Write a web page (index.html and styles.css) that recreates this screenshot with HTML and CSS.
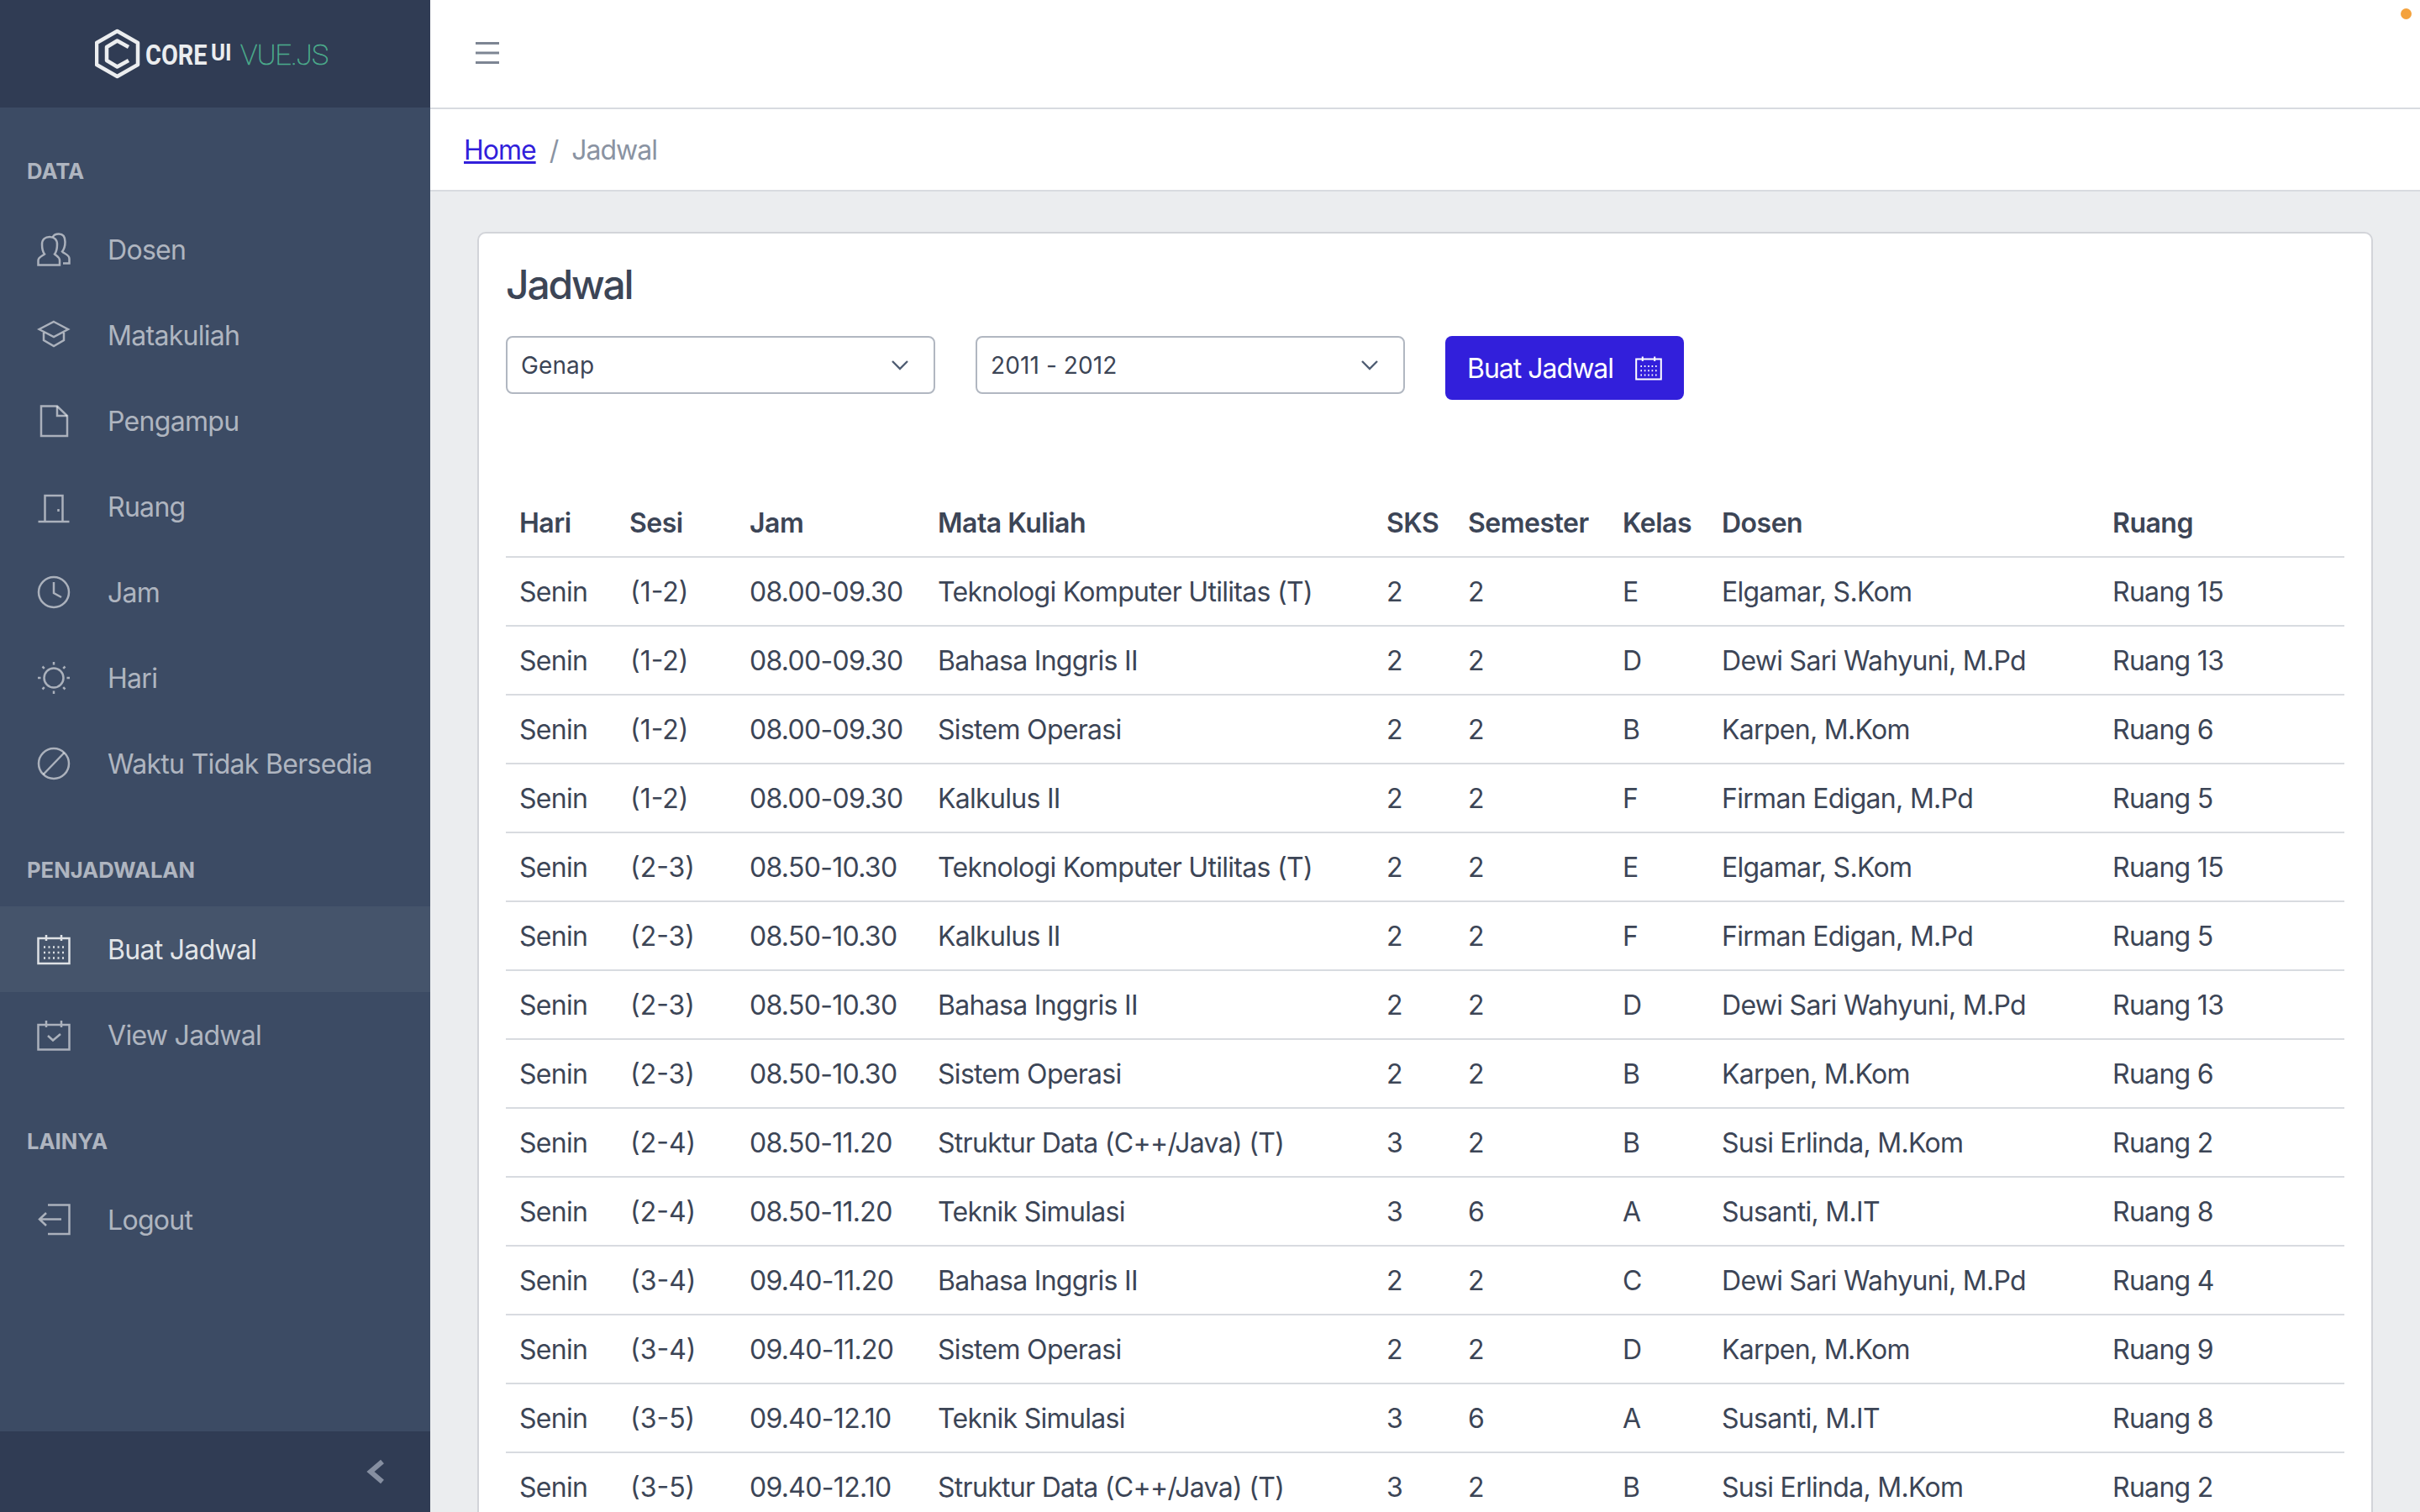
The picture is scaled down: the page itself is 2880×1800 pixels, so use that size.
FILE: index.html
```html
<!DOCTYPE html>
<html lang="en">

<head>
    <meta charset="UTF-8">
    <meta name="viewport" content="width=device-width, initial-scale=1.0">
    <title>Jadwal</title>
    <link rel="stylesheet" href="styles.css">
</head>

<body>
    <svg class="icon-defs" xmlns="http://www.w3.org/2000/svg">
        <symbol id="i-people" viewBox="0 0 40 40">
            <path d="M1.5 38.5V33c0-4 5.500-5.500 7.500-7.500C7 23 6 19 6 14c0-6 4-9 9-9s9 3 9 9c0 5-1 9-3 11.500 2 2 6 3.500 6 7.500v5.500z" />
            <path d="M19 5c1-2.500 4-3.500 7-3.500 5 0 7.500 3.500 7.500 9.500 0 6-1.500 9-3.500 11.500 2 2.500 8.500 3.500 8.500 8.500v5.500H31" />
        </symbol>
        <symbol id="i-cap" viewBox="0 0 40 40">
            <path d="M20 4l17 9-17 9-17.500-9z" />
            <path d="M8 17v9l12 7 12-7v-9" />
        </symbol>
        <symbol id="i-file" viewBox="0 0 40 40">
            <path d="M5 2.500h19L36 14v24H5z" />
            <path d="M24 2.500V14h12" />
        </symbol>
        <symbol id="i-door" viewBox="0 0 40 40">
            <path d="M1.500 38h37M9.500 38V7h21v31M25.500 23v3" />
        </symbol>
        <symbol id="i-clock" viewBox="0 0 40 40">
            <circle cx="20" cy="20" r="18" />
            <path d="M20 8v13l9 5" />
        </symbol>
        <symbol id="i-sun" viewBox="0 0 40 40">
            <circle cx="20" cy="20" r="11.500" />
            <path d="M20 1v3.500M20 35.500V39M1 20h3.500M35.500 20H39M6.500 6.500l2.300 2.300M31.200 31.200l2.300 2.300M33.500 6.500l-2.300 2.300M8.800 31.200l-2.300 2.300" />
        </symbol>
        <symbol id="i-ban" viewBox="0 0 40 40">
            <circle cx="20" cy="20" r="18" />
            <path d="M7.500 33L32.500 7" />
        </symbol>
        <symbol id="i-calendar" viewBox="0 0 40 40">
            <path d="M1.500 7h37v30h-37zM11 3v7M29 3v7" />
            <path class="dots" d="M8 17.500h2M13.500 17.500h2M19 17.500h2M24.500 17.500h2M30 17.500h2M8 24h2M13.500 24h2M19 24h2M24.500 24h2M30 24h2M8 30.500h2M13.500 30.500h2M19 30.500h2M24.500 30.500h2M30 30.500h2" />
        </symbol>
        <symbol id="i-calendar-check" viewBox="0 0 40 40">
            <path d="M1.500 8h37v29.500h-37zM11 3v8M29 3v8" />
            <path d="M13 21l6 5.500 9-7.500" />
        </symbol>
        <symbol id="i-logout" viewBox="0 0 40 40">
            <path d="M13 2.500h25.500V37H13M29 19.500H3M11 12l-8 7.500 8 7.500" />
        </symbol>
    </svg>

    <div class="wrapper">
        <aside class="sidebar">
            <div class="brand">
                <svg class="logo" viewBox="113 32 286 64" width="286" height="64" xmlns="http://www.w3.org/2000/svg">
                    <path class="logo-hex" d="M139.500 37l24.500 14v26l-24.500 14L115 77V51z" />
                    <path class="logo-c" d="M153 56l-13.500-7.500L127 56v16l12.500 7.500L153 72" />
                    <g transform="translate(173 77) scale(.85 1)"><text class="logo-core">CORE</text></g>
                    <g transform="translate(251 72) scale(.96 1)"><text class="logo-ui">UI</text></g>
                    <text class="logo-vue" x="286" y="77" textLength="105" lengthAdjust="spacing">VUE.JS</text>
                </svg>
            </div>
            <nav class="nav">
                <div class="nav-title">Data</div>
                <a class="nav-link"><svg class="nav-icon"><use href="#i-people" /></svg>Dosen</a>
                <a class="nav-link"><svg class="nav-icon"><use href="#i-cap" /></svg>Matakuliah</a>
                <a class="nav-link"><svg class="nav-icon"><use href="#i-file" /></svg>Pengampu</a>
                <a class="nav-link"><svg class="nav-icon"><use href="#i-door" /></svg>Ruang</a>
                <a class="nav-link"><svg class="nav-icon"><use href="#i-clock" /></svg>Jam</a>
                <a class="nav-link"><svg class="nav-icon"><use href="#i-sun" /></svg>Hari</a>
                <a class="nav-link"><svg class="nav-icon"><use href="#i-ban" /></svg>Waktu Tidak Bersedia</a>
                <div class="nav-title">Penjadwalan</div>
                <a class="nav-link active"><svg class="nav-icon"><use href="#i-calendar" /></svg>Buat Jadwal</a>
                <a class="nav-link"><svg class="nav-icon"><use href="#i-calendar-check" /></svg>View Jadwal</a>
                <div class="nav-title">Lainya</div>
                <a class="nav-link"><svg class="nav-icon"><use href="#i-logout" /></svg>Logout</a>
            </nav>
            <div class="sidebar-footer">
                <button class="sidebar-toggler">
                    <svg viewBox="0 0 32 32" width="32" height="32"><path d="M23 4L9 16l14 12" /></svg>
                </button>
            </div>
        </aside>

        <div class="main">
            <header class="topbar">
                <svg class="menu-icon" viewBox="0 0 40 40" width="40" height="40"><path d="M6 7.500h28M6 19h28M6 30.500h28" /></svg>
            </header>
            <div class="crumbs">
                <a class="crumb-link" href="#">Home</a>
                <span class="crumb-sep">/</span>
                <span class="crumb-current">Jadwal</span>
            </div>
            <main class="content">
                <section class="card">
                    <h3 class="card-title">Jadwal</h3>
                    <div class="filters">
                        <select class="form-select">
                            <option>Genap</option>
                        </select>
                        <select class="form-select">
                            <option>2011 - 2012</option>
                        </select>
                        <button class="btn-primary">Buat Jadwal <svg class="btn-icon"><use href="#i-calendar" /></svg></button>
                    </div>
                    <table class="schedule">
                        <colgroup>
                            <col class="col-hari">
                            <col class="col-sesi">
                            <col class="col-jam">
                            <col class="col-mk">
                            <col class="col-sks">
                            <col class="col-sem">
                            <col class="col-kelas">
                            <col class="col-dosen">
                            <col class="col-ruang">
                        </colgroup>
                        <thead>
                            <tr><th>Hari</th><th>Sesi</th><th>Jam</th><th>Mata Kuliah</th><th>SKS</th><th>Semester</th><th>Kelas</th><th>Dosen</th><th>Ruang</th></tr>
                        </thead>
                        <tbody>
                            <tr><td>Senin</td><td>(1-2)</td><td>08.00-09.30</td><td>Teknologi Komputer Utilitas (T)</td><td>2</td><td>2</td><td>E</td><td>Elgamar, S.Kom</td><td>Ruang 15</td></tr>
                            <tr><td>Senin</td><td>(1-2)</td><td>08.00-09.30</td><td>Bahasa Inggris II</td><td>2</td><td>2</td><td>D</td><td>Dewi Sari Wahyuni, M.Pd</td><td>Ruang 13</td></tr>
                            <tr><td>Senin</td><td>(1-2)</td><td>08.00-09.30</td><td>Sistem Operasi</td><td>2</td><td>2</td><td>B</td><td>Karpen, M.Kom</td><td>Ruang 6</td></tr>
                            <tr><td>Senin</td><td>(1-2)</td><td>08.00-09.30</td><td>Kalkulus II</td><td>2</td><td>2</td><td>F</td><td>Firman Edigan, M.Pd</td><td>Ruang 5</td></tr>
                            <tr><td>Senin</td><td>(2-3)</td><td>08.50-10.30</td><td>Teknologi Komputer Utilitas (T)</td><td>2</td><td>2</td><td>E</td><td>Elgamar, S.Kom</td><td>Ruang 15</td></tr>
                            <tr><td>Senin</td><td>(2-3)</td><td>08.50-10.30</td><td>Kalkulus II</td><td>2</td><td>2</td><td>F</td><td>Firman Edigan, M.Pd</td><td>Ruang 5</td></tr>
                            <tr><td>Senin</td><td>(2-3)</td><td>08.50-10.30</td><td>Bahasa Inggris II</td><td>2</td><td>2</td><td>D</td><td>Dewi Sari Wahyuni, M.Pd</td><td>Ruang 13</td></tr>
                            <tr><td>Senin</td><td>(2-3)</td><td>08.50-10.30</td><td>Sistem Operasi</td><td>2</td><td>2</td><td>B</td><td>Karpen, M.Kom</td><td>Ruang 6</td></tr>
                            <tr><td>Senin</td><td>(2-4)</td><td>08.50-11.20</td><td>Struktur Data (C++/Java) (T)</td><td>3</td><td>2</td><td>B</td><td>Susi Erlinda, M.Kom</td><td>Ruang 2</td></tr>
                            <tr><td>Senin</td><td>(2-4)</td><td>08.50-11.20</td><td>Teknik Simulasi</td><td>3</td><td>6</td><td>A</td><td>Susanti, M.IT</td><td>Ruang 8</td></tr>
                            <tr><td>Senin</td><td>(3-4)</td><td>09.40-11.20</td><td>Bahasa Inggris II</td><td>2</td><td>2</td><td>C</td><td>Dewi Sari Wahyuni, M.Pd</td><td>Ruang 4</td></tr>
                            <tr><td>Senin</td><td>(3-4)</td><td>09.40-11.20</td><td>Sistem Operasi</td><td>2</td><td>2</td><td>D</td><td>Karpen, M.Kom</td><td>Ruang 9</td></tr>
                            <tr><td>Senin</td><td>(3-5)</td><td>09.40-12.10</td><td>Teknik Simulasi</td><td>3</td><td>6</td><td>A</td><td>Susanti, M.IT</td><td>Ruang 8</td></tr>
                            <tr><td>Senin</td><td>(3-5)</td><td>09.40-12.10</td><td>Struktur Data (C++/Java) (T)</td><td>3</td><td>2</td><td>B</td><td>Susi Erlinda, M.Kom</td><td>Ruang 2</td></tr>
                        </tbody>
                    </table>
                </section>
            </main>
        </div>
    </div>

    <div class="status-dot"></div>
</body>

</html>
```
FILE: styles.css
```css
* {
    box-sizing: border-box;
}

html,
body {
    height: 100%;
}

body {
    margin: 0;
    overflow: hidden;
    font-family: Inter, "Noto Sans", sans-serif;
    font-size: 32px;
    line-height: 48px;
    letter-spacing: -0.7px;
    color: #3c4556;
    background-color: #ebedef;
}

.icon-defs {
    display: none;
}

.wrapper {
    display: flex;
    height: 100%;
}

/* sidebar */
.sidebar {
    flex: 0 0 512px;
    display: flex;
    flex-direction: column;
    background-color: #3c4b64;
    color: rgba(255, 255, 255, 0.6);
}

.brand {
    flex: 0 0 128px;
    display: flex;
    align-items: center;
    justify-content: center;
    background-color: #303c54;
}

.logo-hex,
.logo-c {
    fill: none;
    stroke: #ebedef;
    stroke-width: 4.5;
    stroke-linejoin: round;
}

.logo-core,
.logo-ui {
    font-family: Roboto, sans-serif;
    font-weight: 700;
    letter-spacing: 0;
    fill: #ebedef;
}

.logo-core {
    font-size: 34px;
}

.logo-ui {
    font-size: 27px;
}

.logo-vue {
    font-family: Roboto, sans-serif;
    font-weight: 100;
    font-size: 34px;
    letter-spacing: 0;
    fill: #4cae8d;
    stroke: #4cae8d;
    stroke-width: 0.6;
}

.nav {
    flex: 1;
}

.nav-title {
    margin-top: 32px;
    padding: 25px 32px 23px;
    font-size: 25.6px;
    line-height: 38.4px;
    font-weight: 700;
    letter-spacing: 0;
    text-transform: uppercase;
}

.nav-link {
    display: flex;
    align-items: center;
    height: 102px;
    padding: 2px 0 0 44px;
    gap: 44px;
}

.nav-link.active {
    background-color: rgba(255, 255, 255, 0.05);
    color: rgba(255, 255, 255, 0.87);
}

.nav-icon {
    width: 40px;
    height: 40px;
    flex: none;
    margin-top: -2px;
    fill: none;
    stroke: currentColor;
    stroke-width: 2.5;
    opacity: 0.95;
}

.sidebar-footer {
    flex: 0 0 96px;
    display: flex;
    justify-content: flex-end;
    background-color: #303c54;
}

.sidebar-toggler {
    width: 128px;
    display: flex;
    align-items: center;
    justify-content: center;
    padding: 0;
    background: none;
    border: none;
}

.sidebar-toggler svg {
    fill: none;
    stroke: #868fa1;
    stroke-width: 6;
}

/* main column */
.main {
    flex: 1;
    min-width: 0;
}

.topbar {
    height: 130px;
    display: flex;
    align-items: center;
    padding-left: 48px;
    background: #fff;
    border-bottom: 2px solid #d8dbe0;
}

.menu-icon {
    fill: none;
    stroke: #7d8593;
    stroke-width: 3;
}

.crumbs {
    height: 98px;
    display: flex;
    align-items: center;
    padding: 1px 0 0 40px;
    letter-spacing: -1px;
    background: #fff;
    border-bottom: 2px solid #d8dbe0;
}

.crumb-link {
    color: #321fdb;
}

.crumb-sep {
    padding: 0 16px;
    color: #8a93a2;
}

.crumb-current {
    color: #8a93a2;
}

.content {
    padding: 48px 56px;
}

.card {
    padding: 32px;
    background: #fff;
    border: 2px solid #d2d4d9;
    border-radius: 10px;
}

.card-title {
    margin: 0 0 32px;
    font-size: 48px;
    line-height: 58px;
    font-weight: 500;
    letter-spacing: -2.2px;
}

.filters {
    display: flex;
    align-items: flex-start;
    gap: 48px;
}

.form-select {
    width: 511px;
    height: 69px;
    padding: 0 16px;
    font-family: inherit;
    font-size: 28px;
    letter-spacing: 0.1px;
    color: inherit;
    background-color: #fff;
    background-image: url("data:image/svg+xml,%3csvg xmlns='http://www.w3.org/2000/svg' viewBox='0 0 20 12'%3e%3cpath fill='none' stroke='%234f5d73' stroke-width='2.4' d='M1 1l9 9 9-9'/%3e%3c/svg%3e");
    background-repeat: no-repeat;
    background-position: right 30px center;
    background-size: 20px 12px;
    border: 2px solid #b1b7c1;
    border-radius: 8px;
    appearance: none;
}

.btn-primary {
    height: 76px;
    display: flex;
    align-items: center;
    gap: 26px;
    padding: 0 26px;
    font-family: inherit;
    font-size: 32px;
    letter-spacing: -1px;
    color: #fff;
    background-color: #321fdb;
    border: none;
    border-radius: 8px;
}

.btn-icon {
    width: 32px;
    height: 32px;
    fill: none;
    stroke: currentColor;
    stroke-width: 2.5;
}

.schedule {
    width: 2188px;
    margin-top: 106px;
    border-collapse: collapse;
    table-layout: fixed;
}

.col-hari { width: 131px; }
.col-sesi { width: 143px; }
.col-jam { width: 224px; }
.col-mk { width: 534px; }
.col-sks { width: 97px; }
.col-sem { width: 184px; }
.col-kelas { width: 118px; }
.col-dosen { width: 465px; }
.col-ruang { width: 292px; }

.schedule th,
.schedule td {
    padding: 17px 16px 15px;
    text-align: left;
    white-space: nowrap;
    border-bottom: 2px solid #d8dbe0;
}

.schedule th {
    font-weight: 600;
    letter-spacing: -0.5px;
}

.schedule td:nth-child(2) {
    padding-left: 17px;
    letter-spacing: 0;
}

.status-dot {
    position: absolute;
    top: 10px;
    right: 10px;
    width: 13px;
    height: 13px;
    border-radius: 50%;
    background-color: #f4a23c;
}
```
